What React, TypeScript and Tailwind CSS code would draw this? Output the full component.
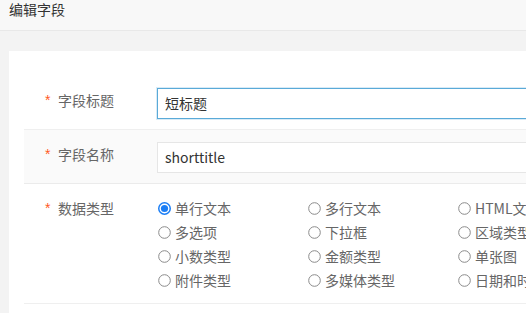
import React from "react";

const font = { fontFamily: '"Noto Sans CJK SC", "Noto Sans", sans-serif' };

const options = [
  "单行文本", "多行文本", "HTML文本",
  "多选项", "下拉框", "区域类型",
  "小数类型", "金额类型", "单张图",
  "附件类型", "多媒体类型", "日期和时间",
];

function Radio({ checked }: { checked?: boolean }) {
  return checked ? (
    <svg width="13" height="13" viewBox="0 0 13 13" className="shrink-0">
      <circle cx="6.5" cy="6.5" r="5.75" fill="#fff" stroke="#1b7ef5" strokeWidth="1.5" />
      <circle cx="6.5" cy="6.5" r="3.6" fill="#1b7ef5" />
    </svg>
  ) : (
    <svg width="13" height="13" viewBox="0 0 13 13" className="shrink-0">
      <circle cx="6.5" cy="6.5" r="5.8" fill="#fff" stroke="#8a8a8a" strokeWidth="1" />
    </svg>
  );
}

function Label({ text }: { text: string }) {
  return (
    <div className="w-[133px] shrink-0 pl-[21px] flex items-start text-[14px] leading-[24px] text-[#666]">
      <span className="w-[13px] text-[#ff5a1f] text-[14px] leading-[24px]" style={{ fontFamily: '"Liberation Sans", sans-serif' }}>*</span>
      <span>{text}</span>
    </div>
  );
}

export default function App() {
  return (
    <div className="w-[526px] h-[313px] overflow-hidden bg-[#f3f3f3]" style={font}>
      <div className="h-[31px] bg-[#f8f8f8] border-b border-[#e8e8e8] px-[9px] text-[14px] leading-[19px] text-[#333]">
        编辑字段
      </div>
      <div className="ml-[9px] mt-[20px] w-[700px] bg-white pl-[15px] pt-[26px] h-[400px]">
        <div className="flex items-start h-[53px] pt-[11px] border-b border-[#efefef]">
          <Label text="字段标题" />
          <div className="w-[500px] h-[31px] border border-[#5aaad8] shadow-[0_0_0_1px_#d9ebf6] pl-[7px] text-[14px] leading-[29px] text-[#333]">
            短标题
          </div>
        </div>
        <div className="flex items-start h-[54px] pt-[12px] bg-[#fafafa] border-b border-[#ebebeb]">
          <Label text="字段名称" />
          <div className="w-[500px] h-[31px] border border-[#e6e6e6] bg-white pl-[7px] text-[14px] leading-[29px] text-[#333]">
            shorttitle
          </div>
        </div>
        <div className="flex items-start h-[120px] pt-[12px] border-b border-[#efefef]">
          <Label text="数据类型" />
          <div className="grid grid-cols-[150px_150px_150px] text-[14px] leading-[24px] text-[#666]">
            {options.map((o, i) => (
              <div key={o} className="flex items-center gap-[4px] whitespace-nowrap h-[24px] pl-[1px]">
                <Radio checked={i === 0} />
                <span>{o}</span>
              </div>
            ))}
          </div>
        </div>
      </div>
    </div>
  );
}
